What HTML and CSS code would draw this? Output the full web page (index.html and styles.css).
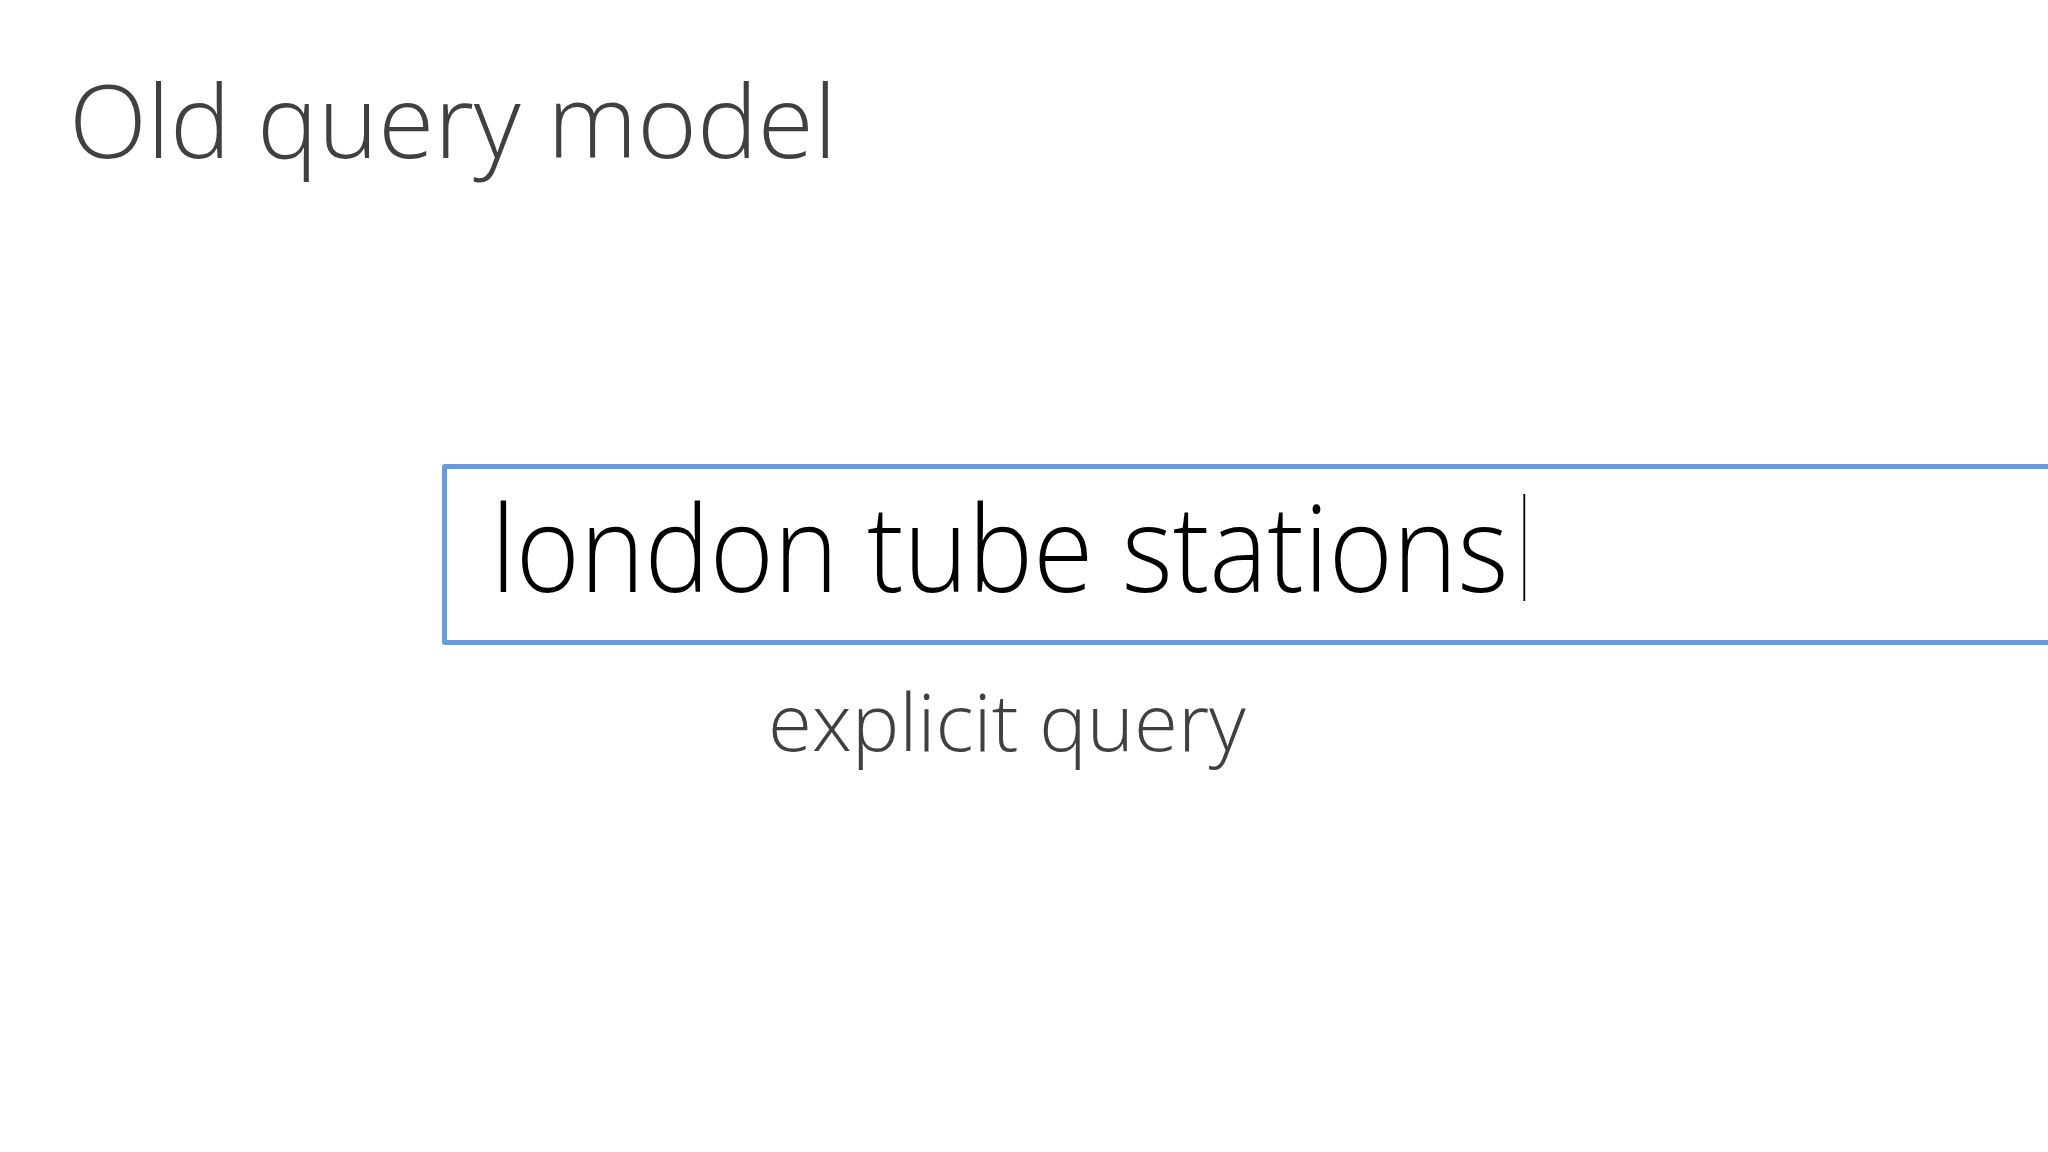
FILE: index.html
```html
<!DOCTYPE html>
<html lang="en">
<head>
<meta charset="utf-8">
<title>Old query model</title>
<link rel="stylesheet" href="styles.css">
</head>
<body>
<main class="slide">
  <h1 class="title">Old query model</h1>
  <div class="query-box">
    <span class="query-line"><span class="query-text">london tube stations</span><span class="cursor"></span></span>
  </div>
  <p class="caption">explicit query</p>
</main>
</body>
</html>
```
FILE: styles.css
```css
html, body {
  margin: 0;
  padding: 0;
  background: #ffffff;
  overflow: hidden;
}
.slide {
  width: 2048px;
  height: 1152px;
  overflow: hidden;
  font-family: "Open Sans", "Liberation Sans", sans-serif;
  font-weight: 300;
}
.title {
  margin: 68px 0 0 69px;
  font-size: 102px;
  line-height: 1;
  font-weight: 300;
  color: #404040;
}
.query-box {
  margin: 294px 0 0 442px;
  width: 1700px;
  border: 5px solid #6a9bd8;
  border-radius: 3px;
  padding: 17px 0 34px 44px;
  box-sizing: content-box;
  font-size: 120px;
  line-height: 1;
  color: #000000;
  white-space: nowrap;
}
.query-line {
  display: inline-block;
  transform: scaleX(0.912);
  transform-origin: left center;
}
.cursor {
  display: inline-block;
  width: 2px;
  height: 107px;
  background: #000000;
  margin-left: 16px;
  vertical-align: -9px;
}
.caption {
  margin: 35px 0 0 768px;
  font-size: 80px;
  line-height: 1;
  color: #404040;
}
```
